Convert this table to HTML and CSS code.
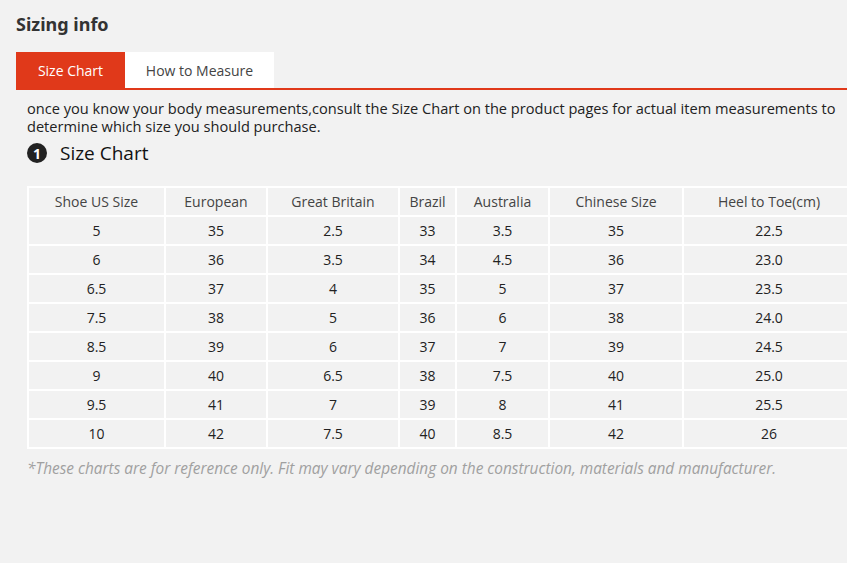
FILE: index.html
```html
<!DOCTYPE html>
<html>
<head>
<meta charset="utf-8">
<link rel="stylesheet" href="styles.css">
</head>
<body>
<div class="page">
  <h1 class="title">Sizing info</h1>
  <div class="tabs">
    <div class="tab tab-active">Size Chart</div>
    <div class="tab">How to Measure</div>
  </div>
  <div class="content">
    <p class="intro">once you know your body measurements,consult the Size Chart on the product pages for actual item measurements to determine which size you should purchase.</p>
    <div class="section-head">
      <span class="num">1</span>
      <span class="section-title">Size Chart</span>
    </div>
    <table class="chart">
      <colgroup>
        <col class="c1"><col class="c2"><col class="c3"><col class="c4"><col class="c5"><col class="c6"><col class="c7">
      </colgroup>
      <thead>
        <tr><th>Shoe US Size</th><th>European</th><th>Great Britain</th><th>Brazil</th><th>Australia</th><th>Chinese Size</th><th>Heel to Toe(cm)</th></tr>
      </thead>
      <tbody>
        <tr><td>5</td><td>35</td><td>2.5</td><td>33</td><td>3.5</td><td>35</td><td>22.5</td></tr>
        <tr><td>6</td><td>36</td><td>3.5</td><td>34</td><td>4.5</td><td>36</td><td>23.0</td></tr>
        <tr><td>6.5</td><td>37</td><td>4</td><td>35</td><td>5</td><td>37</td><td>23.5</td></tr>
        <tr><td>7.5</td><td>38</td><td>5</td><td>36</td><td>6</td><td>38</td><td>24.0</td></tr>
        <tr><td>8.5</td><td>39</td><td>6</td><td>37</td><td>7</td><td>39</td><td>24.5</td></tr>
        <tr><td>9</td><td>40</td><td>6.5</td><td>38</td><td>7.5</td><td>40</td><td>25.0</td></tr>
        <tr><td>9.5</td><td>41</td><td>7</td><td>39</td><td>8</td><td>41</td><td>25.5</td></tr>
        <tr><td>10</td><td>42</td><td>7.5</td><td>40</td><td>8.5</td><td>42</td><td>26</td></tr>
      </tbody>
    </table>
    <p class="note">*These charts are for reference only. Fit may vary depending on the construction, materials and manufacturer.</p>
  </div>
</div>
</body>
</html>
```

FILE: styles.css
```css
html, body {
  margin: 0;
  padding: 0;
  background: #f2f2f2;
  overflow: hidden;
}
body {
  width: 847px;
  height: 563px;
  font-family: "Open Sans", "Noto Sans", sans-serif;
  color: #222;
}
.page {
  padding: 12px 0 0 16px;
  width: 831px;
}
.title {
  margin: 0;
  font-family: "Noto Sans", sans-serif;
  font-size: 18px;
  font-weight: 700;
  color: #333;
  line-height: 24px;
}
.tabs {
  display: flex;
  margin-top: 16px;
  border-bottom: 2px solid #e0391a;
}
.tab {
  height: 36px;
  line-height: 38px;
  font-size: 14px;
  color: #444;
  background: #fff;
  width: 149px;
  white-space: nowrap;
  text-align: center;
}
.tab-active {
  background: #e0391a;
  color: #fff;
  width: 109px;
}
.content {
  padding-left: 11px;
}
.intro {
  margin: 9px 0 0;
  width: 820px;
  font-size: 14.6px;
  line-height: 18px;
  color: #222;
}
.section-head {
  display: flex;
  align-items: center;
  margin-top: 6px;
  height: 24px;
}
.num {
  width: 20px;
  height: 20px;
  border-radius: 50%;
  background: #222;
  color: #fff;
  font-size: 14px;
  font-weight: 700;
  text-align: center;
  line-height: 21px;
  margin-right: 13px;
}
.section-title {
  font-size: 19px;
  color: #111;
}
.chart {
  margin-top: 21px;
  border-collapse: collapse;
  table-layout: fixed;
  width: 827px;
  font-size: 14px;
  border: 1px solid #fff;
}
.c1 { width: 137px; }
.c2 { width: 102px; }
.c3 { width: 132px; }
.c4 { width: 57px; }
.c5 { width: 93px; }
.c6 { width: 134px; }
.c7 { width: 172px; }
.chart th, .chart td {
  border: 2px solid #fff;
  height: 27px;
  padding: 0;
  text-align: center;
  font-weight: 400;
}
.chart th {
  color: #444;
}
.chart td {
  color: #222;
}
.note {
  margin: 9px 0 0;
  font-size: 15.4px;
  font-style: italic;
  color: #a0a0a0;
  white-space: nowrap;
}
```
